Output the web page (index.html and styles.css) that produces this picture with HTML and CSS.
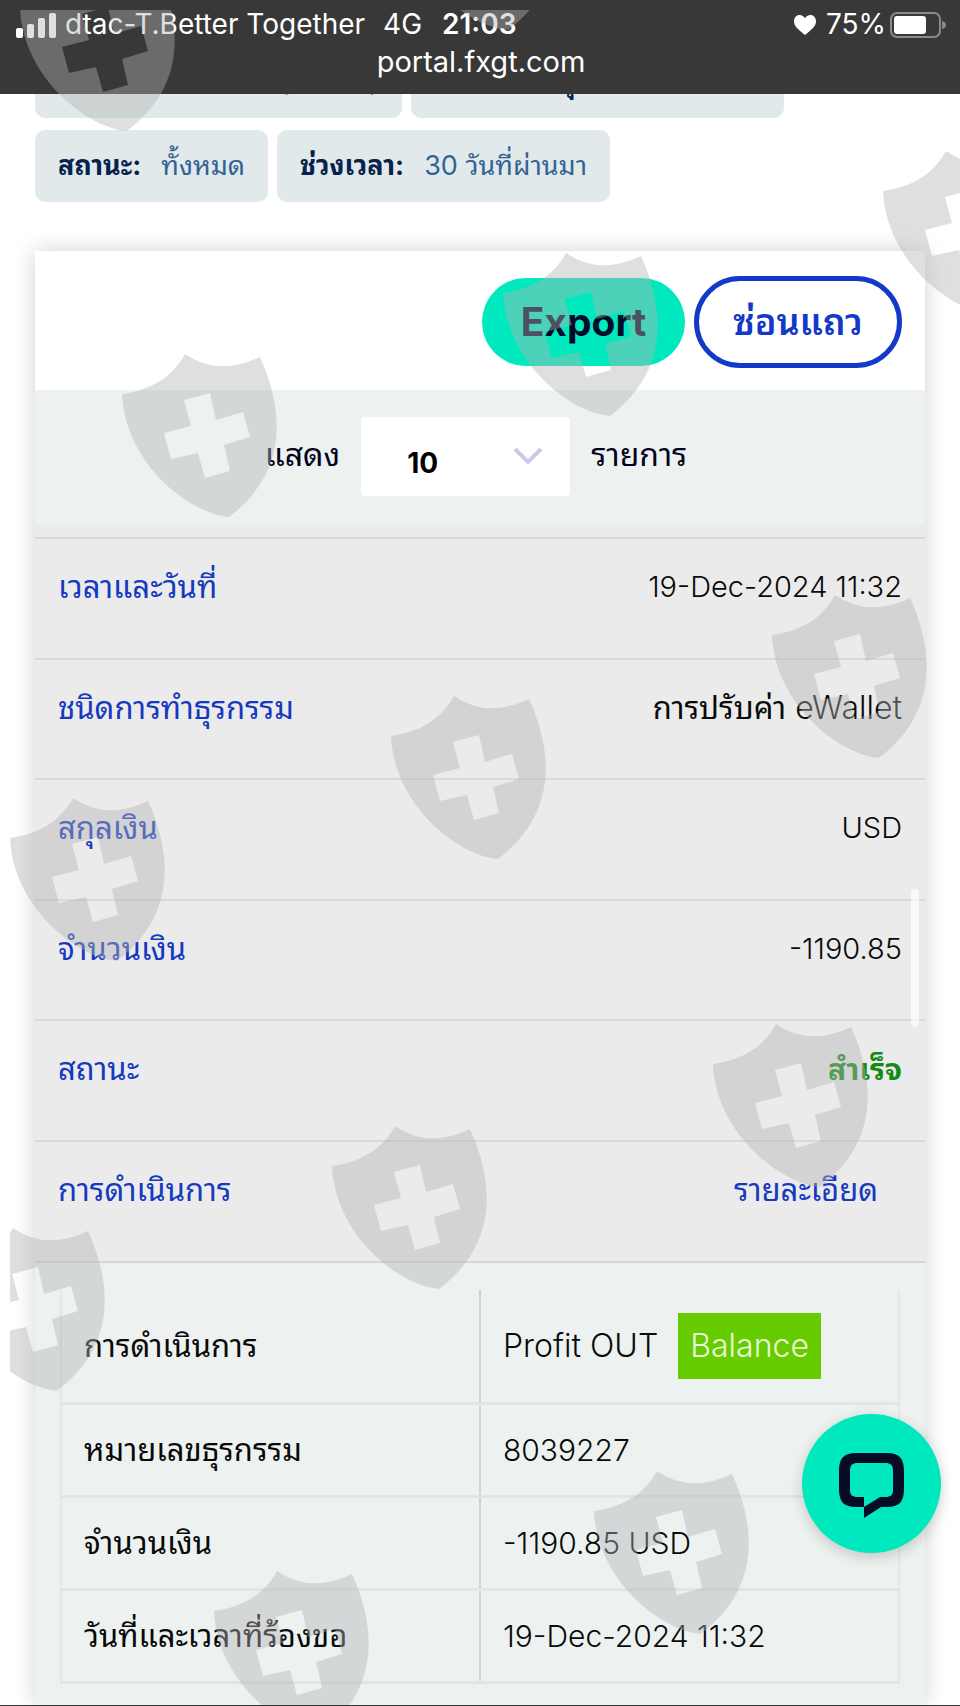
FILE: index.html
```html
<!DOCTYPE html>
<html lang="th">
<head>
<meta charset="utf-8">
<meta name="viewport" content="width=device-width, initial-scale=1">
<title>portal.fxgt.com</title>
<link rel="stylesheet" href="styles.css">
</head>
<body>
<header class="status">
  <div class="status-row">
    <svg class="signal" viewBox="0 0 40 26" aria-hidden="true"><rect x="0" y="16" width="7" height="10" rx="2"/><rect x="11" y="12" width="7" height="14" rx="2"/><rect x="22" y="6" width="7" height="20" rx="2"/><rect x="33" y="1" width="7" height="25" rx="2"/></svg>
    <span>dtac-T.Better Together</span>
    <span class="network">4G</span>
    <strong class="clock">21:03</strong>
    <svg class="heart" viewBox="0 0 22 20" aria-hidden="true"><path d="M11 20C5 15 0 11.500 0 6.500C0 2.500 2.500 0 5.500 0C8 0 10 1.300 11 3.200C12 1.300 14 0 16.500 0C19.500 0 22 2.500 22 6.500C22 11.500 17 15 11 20Z"/></svg>
    <span class="charge">75%</span>
    <svg class="battery" viewBox="0 0 56 26" aria-hidden="true"><rect class="battery-shell" x="1" y="1" width="49" height="24" rx="6"/><rect x="4" y="4" width="32" height="18" rx="3"/><path class="battery-cap" d="M52 9Q56 10 56 13Q56 16 52 17Z"/></svg>
  </div>
  <div class="address">portal.fxgt.com</div>
</header>

<main class="page">
  <div class="filters">
    <div class="chip chip-account"><span>(</span><span>)</span></div>
    <div class="chip chip-kind"><b>กุ</b></div>
  </div>
  <div class="filters">
    <div class="chip"><b>สถานะ:</b><span>ทั้งหมด</span></div>
    <div class="chip"><b>ช่วงเวลา:</b><span>30 วันที่ผ่านมา</span></div>
  </div>

  <section class="card">
    <div class="toolbar">
      <button class="btn btn-fill" type="button">Export</button>
      <button class="btn btn-line" type="button">ซ่อนแถว</button>
    </div>
    <div class="length">
      <label for="length">แสดง</label>
      <div class="select-box">
        <select id="length"><option>10</option></select>
        <svg class="chevron" viewBox="0 0 30 18" aria-hidden="true"><path d="M2 2L15 15L28 2"/></svg>
      </div>
      <span>รายการ</span>
    </div>

    <table class="record">
      <tr><th scope="row">เวลาและวันที่</th><td>19-Dec-2024 11:32</td></tr>
      <tr><th scope="row">ชนิดการทำธุรกรรม</th><td class="kind"><span class="thai">การปรับค่า</span> eWallet</td></tr>
      <tr><th scope="row">สกุลเงิน</th><td>USD</td></tr>
      <tr><th scope="row">จำนวนเงิน</th><td>-1190.85</td></tr>
      <tr><th scope="row">สถานะ</th><td class="done">สำเร็จ</td></tr>
      <tr><th scope="row">การดำเนินการ</th><td><a class="thai more" href="#details">รายละเอียด</a></td></tr>
    </table>

    <div class="details" id="details">
      <table class="detail-table">
        <tr class="detail-first"><th scope="row">การดำเนินการ</th><td>Profit OUT <span class="badge">Balance</span></td></tr>
        <tr><th scope="row">หมายเลขธุรกรรม</th><td>8039227</td></tr>
        <tr><th scope="row">จำนวนเงิน</th><td>-1190.85 USD</td></tr>
        <tr><th scope="row">วันที่และเวลาที่ร้องขอ</th><td>19-Dec-2024 11:32</td></tr>
      </table>
    </div>
  </section>
</main>

<div class="scroll-thumb"></div>

<svg class="shields" aria-hidden="true">
  <defs>
    <path id="shield" fill-rule="evenodd" d="M0 40C28 36 50 24 63 0Q96 23 138 3C164 60 164 120 107 163C68 160 3 110 0 40ZM62 46L88 39L94 66L121 58L128 83L102 91L108 117L83 124L76 99L49 105L42 79L69 72Z"/>
  </defs>
  <use href="#shield" x="10" y="-42"/>
  <use href="#shield" x="391" y="-143"/>
  <use href="#shield" x="873" y="141"/>
  <use href="#shield" x="493" y="243"/>
  <use href="#shield" x="112" y="344"/>
  <use href="#shield" x="762" y="585"/>
  <use href="#shield" x="381" y="686"/>
  <use href="#shield" x="0" y="788"/>
  <use href="#shield" x="703" y="1014"/>
  <use href="#shield" x="322" y="1116"/>
  <use href="#shield" x="-60" y="1218"/>
  <use href="#shield" x="584" y="1461"/>
  <use href="#shield" x="204" y="1561"/>
</svg>

<button class="chat" type="button" aria-label="Chat">
  <svg viewBox="0 0 65 65" aria-hidden="true"><path d="M25 54H17C5 54 0 49 0 36V18C0 5 5 0 17 0H48C60 0 65 5 65 18V36C65 49 60 54 48 54H42L25 65V54L41 44H46C52 44 54 42 54 37V18C54 12 52 10 46 10H19C13 10 11 12 11 18V37C11 42 13 44 19 44H25Z"/></svg>
</button>
</body>
</html>
```
FILE: styles.css
```css
* { box-sizing: border-box; }

body {
  position: relative;
  margin: 0;
  min-height: 100vh;
  overflow-x: hidden;
  background: #fff;
  border-bottom: 1px solid #383838;
  color: #0a0a0a;
  font-family: Inter, "Noto Sans Thai Looped", "Noto Looped Thai", Loma, "Noto Sans Thai", "Noto Sans", sans-serif;
  font-size: 28px;
  line-height: 40px;
}

table { border-collapse: collapse; width: 100%; }
th { font-size: 31px; font-weight: 400; text-align: left; }
td { font-size: 29px; font-weight: 300; }
.thai { font-size: 31px; font-weight: 400; }

.status {
  position: relative;
  z-index: 1;
  height: 94px;
  padding: 6px 14px 0 16px;
  background: #383838;
  color: #fff;
  font-size: 28px;
  line-height: 37px;
}
.status-row { display: flex; align-items: center; }
.status svg { fill: #fff; }
.signal { width: 40px; height: 26px; margin-right: 9px; }
.network { margin-left: 18px; }
.clock { margin-left: 20px; font-weight: 600; }
.heart { width: 22px; height: 20px; margin-left: auto; }
.charge { margin: 0 4px 0 10px; }
.battery { width: 56px; height: 26px; }
.status .battery-shell { fill: none; stroke: #8a8a8a; stroke-width: 2; }
.status .battery-cap { fill: #8a8a8a; }
.address { text-align: center; font-size: 29px; }

.page { margin-top: -48px; padding: 0 35px; }
.filters { display: flex; gap: 9px; margin-bottom: 12px; }
.chip {
  display: flex;
  align-items: center;
  gap: 20px;
  height: 72px;
  padding: 0 23px;
  border-radius: 10px;
  background: #e1e9ea;
  color: #326394;
  font-size: 27px;
}
.chip b { color: #06224d; font-weight: 700; }
.chip-account { width: 367px; justify-content: flex-end; gap: 80px; color: #444; }
.chip-kind { width: 373px; padding-left: 147px; }

.card {
  margin-top: 49px;
  background: #fff;
  box-shadow: 0 0 22px rgba(0, 0, 0, 0.18);
}
.toolbar {
  display: flex;
  justify-content: flex-end;
  align-items: center;
  gap: 9px;
  height: 139px;
  padding: 2px 23px 0;
}
.btn {
  padding: 0;
  border: 0;
  border-radius: 46px;
  font: inherit;
  font-weight: 700;
}
.btn-fill { width: 203px; height: 88px; background: #00e8be; color: #030c27; font-size: 39px; }
.btn-line { width: 208px; height: 92px; border: 5px solid #1339c8; background: #fff; color: #1339c8; font-size: 36px; font-weight: 600; }

.length {
  display: flex;
  justify-content: center;
  gap: 21px;
  height: 147px;
  padding: 27px 8px 0 0;
  border-bottom: 12px solid #ebebeb;
  background: #edf2f1;
  color: #04041e;
  font-size: 32px;
  line-height: 76px;
}
.select-box { position: relative; width: 209px; height: 79px; }
.select-box select {
  width: 100%;
  height: 100%;
  padding: 8px 46px 0;
  border: 0;
  border-radius: 4px;
  appearance: none;
  background: #fff;
  color: #000;
  font: inherit;
  font-size: 28px;
  font-weight: 700;
}
.chevron { position: absolute; right: 27px; top: 30px; width: 30px; height: 18px; fill: none; stroke: #c9c9ee; stroke-width: 4; }

.record { height: 724px; background: #ebebeb; }
.record th, .record td { padding: 28px 23px; border-top: 2px solid #d9d9d9; vertical-align: top; }
.record th { color: #1539c0; }
.record td { text-align: right; }
.record .kind { font-size: 32px; }
.record .done { color: #148a14; font-size: 30px; font-weight: 700; }
.more { margin-right: 24px; color: #1539c0; text-decoration: none; }

.details { padding: 27px 25px 21px; border-top: 2px solid #d5d7d7; background: #edf2f1; }
.detail-table { table-layout: fixed; border: 2px solid #e2e6e6; border-top: 0; }
.detail-table tr { height: 93px; }
.detail-table .detail-first { height: 113px; }
.detail-table th, .detail-table td { padding: 0 22px; border-bottom: 3px solid #e1e5e5; }
.detail-table td { border-left: 2px solid #d0d4d4; font-size: 30px; }
.detail-table .detail-first td { font-size: 32px; }
.badge { display: inline-block; margin-left: 11px; padding: 13px 12px; background: #66cc00; color: #e9f8d8; }

.scroll-thumb { position: absolute; top: 889px; right: 41px; width: 8px; height: 138px; border-radius: 4px; background: rgba(255, 255, 255, 0.65); }

.shields {
  position: absolute;
  z-index: 2;
  top: 10px;
  left: 10px;
  width: calc(100% - 10px);
  height: calc(100% - 10px);
  overflow: hidden;
  fill: rgba(178, 178, 178, 0.42);
  pointer-events: none;
}

.chat {
  position: fixed;
  z-index: 3;
  right: 19px;
  bottom: 153px;
  display: flex;
  align-items: center;
  justify-content: center;
  width: 139px;
  height: 139px;
  padding: 3px 0 0;
  border: 0;
  border-radius: 50%;
  background: #00e8be;
  box-shadow: 0 4px 14px rgba(0, 0, 0, 0.18);
}
.chat svg { width: 65px; height: 65px; fill: #060c26; }
```
